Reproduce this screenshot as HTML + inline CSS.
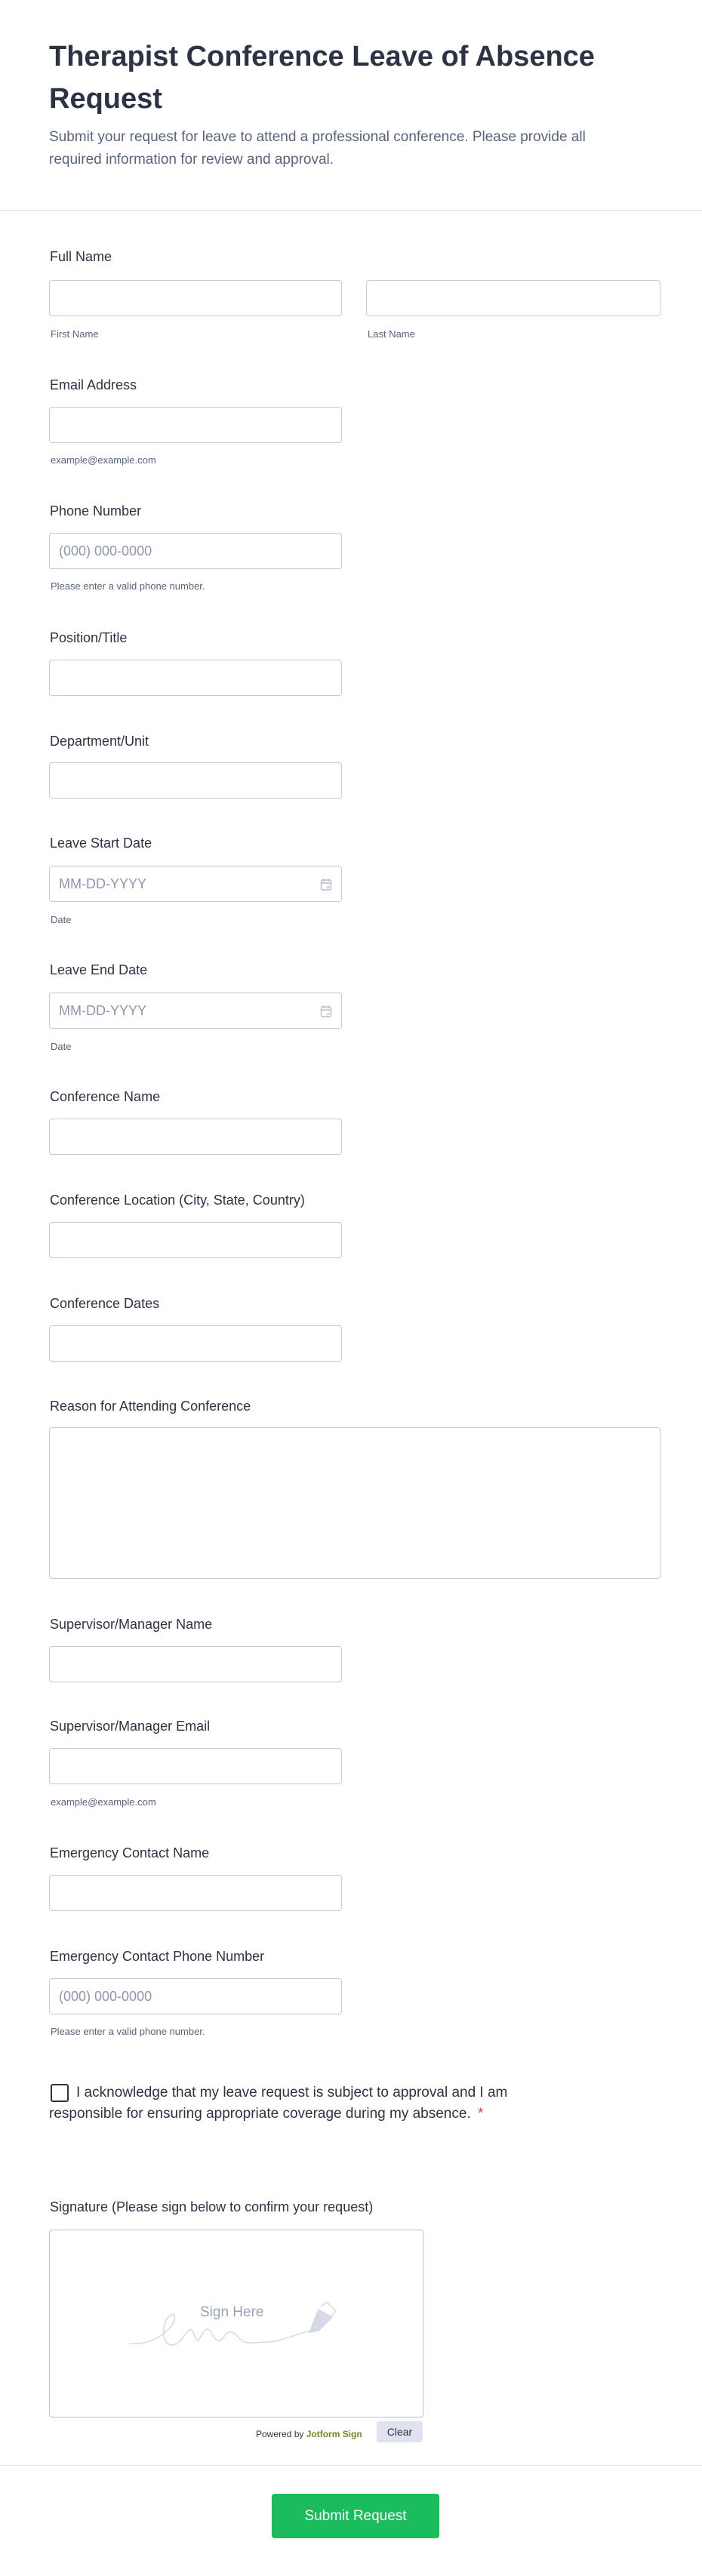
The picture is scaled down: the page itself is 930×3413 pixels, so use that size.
<!DOCTYPE html>
<html><head><meta charset="utf-8"><style>
*{box-sizing:border-box;margin:0;padding:0}
body{width:930px;height:3413px;background:#fff;font-family:"Liberation Sans",sans-serif;color:#2c3345;position:relative;overflow:hidden}
.a{position:absolute}
h1{position:absolute;left:65px;top:47px;width:820px;font-size:38px;line-height:56px;font-weight:bold;color:#2c3345}
.sub{position:absolute;left:65px;top:167px;width:770px;font-size:19px;line-height:30px;color:#57647e}
.hr{position:absolute;left:0;width:930px;height:1px;background:#d8dce6}
.lb{position:absolute;left:66px;font-size:18px;line-height:24px;color:#2c3345}
.in{position:absolute;left:65px;width:388px;height:48px;border:1px solid #c3cad8;border-radius:4px;background:#fff}
.sl{position:absolute;left:67px;font-size:13px;line-height:16px;color:#57647e}
.ph{position:absolute;left:12px;top:13px;font-size:18px;color:#8d96ab}
</style></head><body>
<h1>Therapist Conference Leave of Absence Request</h1>
<div class="sub">Submit your request for leave to attend a professional conference. Please provide all required information for review and approval.</div>
<div class="hr" style="top:278px"></div>

<div class="lb" style="top:328px">Full Name</div>
<div class="in" style="top:371px"></div>
<div class="in" style="top:371px;left:485px;width:390px"></div>
<div class="sl" style="top:435px">First Name</div>
<div class="sl" style="top:435px;left:487px">Last Name</div>

<div class="lb" style="top:498px">Email Address</div>
<div class="in" style="top:539px"></div>
<div class="sl" style="top:602px">example@example.com</div>

<div class="lb" style="top:665px">Phone Number</div>
<div class="in" style="top:706px"><span class="ph">(000) 000-0000</span></div>
<div class="sl" style="top:769px">Please enter a valid phone number.</div>

<div class="lb" style="top:833px">Position/Title</div>
<div class="in" style="top:874px"></div>

<div class="lb" style="top:970px">Department/Unit</div>
<div class="in" style="top:1010px"></div>

<div class="lb" style="top:1105px">Leave Start Date</div>
<div class="in" style="top:1147px"><span class="ph">MM-DD-YYYY</span>
<svg class="a" style="right:12px;top:15px" width="16" height="18" viewBox="0 0 16 18" fill="none" stroke="#b7bdcc" stroke-width="1.4"><rect x="1.5" y="3" width="13" height="13" rx="2"/><path d="M5 1v4M11 1v4M1.5 7h13M9 12l1.5 1.5L13 11"/></svg></div>
<div class="sl" style="top:1211px">Date</div>

<div class="lb" style="top:1273px">Leave End Date</div>
<div class="in" style="top:1315px"><span class="ph">MM-DD-YYYY</span>
<svg class="a" style="right:12px;top:15px" width="16" height="18" viewBox="0 0 16 18" fill="none" stroke="#b7bdcc" stroke-width="1.4"><rect x="1.5" y="3" width="13" height="13" rx="2"/><path d="M5 1v4M11 1v4M1.5 7h13M9 12l1.5 1.5L13 11"/></svg></div>
<div class="sl" style="top:1379px">Date</div>

<div class="lb" style="top:1441px">Conference Name</div>
<div class="in" style="top:1482px"></div>

<div class="lb" style="top:1578px">Conference Location (City, State, Country)</div>
<div class="in" style="top:1619px"></div>

<div class="lb" style="top:1715px">Conference Dates</div>
<div class="in" style="top:1756px"></div>

<div class="lb" style="top:1851px">Reason for Attending Conference</div>
<div class="in" style="top:1891px;width:810px;height:201px"></div>

<div class="lb" style="top:2140px">Supervisor/Manager Name</div>
<div class="in" style="top:2181px"></div>

<div class="lb" style="top:2275px">Supervisor/Manager Email</div>
<div class="in" style="top:2316px"></div>
<div class="sl" style="top:2380px">example@example.com</div>

<div class="lb" style="top:2443px">Emergency Contact Name</div>
<div class="in" style="top:2484px"></div>

<div class="lb" style="top:2580px">Emergency Contact Phone Number</div>
<div class="in" style="top:2621px"><span class="ph">(000) 000-0000</span></div>
<div class="sl" style="top:2684px">Please enter a valid phone number.</div>

<div class="a" style="left:67px;top:2761px;width:24px;height:24px;border:2px solid #2c3345;border-radius:3px"></div>
<div class="a" style="left:65px;top:2759px;width:700px;font-size:19px;line-height:28px;color:#2c3345;text-indent:36px">I acknowledge that my leave request is subject to approval and I am responsible for ensuring appropriate coverage during my absence. <span style="color:#f23a3c;margin-left:4px">*</span></div>

<div class="lb" style="top:2912px">Signature (Please sign below to confirm your request)</div>
<div class="a" style="left:65px;top:2954px;width:496px;height:249px;border:1px solid #b8c4da;border-radius:4px"></div>
<div class="a" style="left:265px;top:3053px;font-size:19px;color:#9aa2b5">Sign Here</div>
<svg class="a" style="left:170px;top:3050px" width="290" height="60" viewBox="0 0 290 60" fill="none" stroke="#d5dae6" stroke-width="1.6"><path d="M1 55c20 2 40-5 55-22 10-12 5-25-5-10-8 14-5 35 8 34 12-1 20-25 25-20 5 5 5 20 10 12 5-9 10-18 15-10 5 9 10 18 17 8 6-10 12-10 20 0 10 11 20 6 40 6 20-2 40-12 55-15"/><path d="M240 40l12-30 18 10-18 18z" fill="#d5dae6"/><path d="M255 6l8-6 12 12-6 7"/></svg>
<div class="a" style="left:339px;top:3218px;font-size:12px;color:#2c3345">Powered by <b style="color:#6a8a1c">Jotform Sign</b></div>
<div class="a" style="left:499px;top:3208px;width:61px;height:28px;background:#dfe3f1;border-radius:3px;font-size:14px;line-height:28px;text-align:center;color:#2c3345">Clear</div>

<div class="hr" style="top:3266px;background:#e3e6ee"></div>
<div class="a" style="left:360px;top:3304px;width:222px;height:59px;background:#1bbc5c;border-radius:4px;color:#fff;font-size:19px;line-height:59px;text-align:center">Submit Request</div>
</body></html>
